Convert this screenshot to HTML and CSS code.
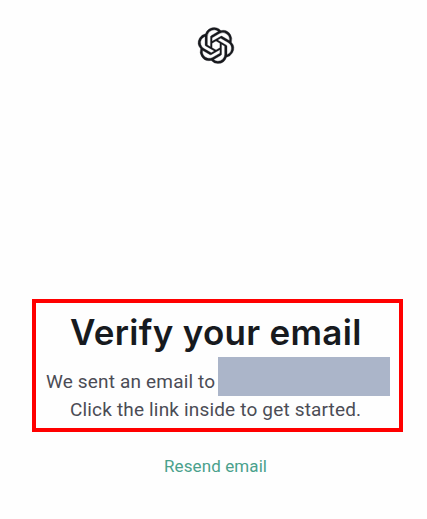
FILE: index.html
```html
<!DOCTYPE html>
<html lang="en">
<head>
<meta charset="utf-8">
<title>Verify your email</title>
<link rel="stylesheet" href="styles.css">
</head>
<body>
<main class="page">
<header class="brand">
<svg class="logo" viewBox="0 0 24 24" role="img" aria-label="OpenAI"><path d="M22.2819 9.8211a5.9847 5.9847 0 0 0-.5157-4.9108 6.0462 6.0462 0 0 0-6.5098-2.9A6.0651 6.0651 0 0 0 4.9807 4.1818a5.9847 5.9847 0 0 0-3.9977 2.9 6.0462 6.0462 0 0 0 .7427 7.0966 5.98 5.98 0 0 0 .511 4.9107 6.051 6.051 0 0 0 6.5146 2.9001A5.9847 5.9847 0 0 0 13.2599 24a6.0557 6.0557 0 0 0 5.7718-4.2058 5.9894 5.9894 0 0 0 3.9977-2.9001 6.0557 6.0557 0 0 0-.7475-7.0729zm-9.022 12.6081a4.4755 4.4755 0 0 1-2.8764-1.0408l.1419-.0804 4.7783-2.7582a.7948.7948 0 0 0 .3927-.6813v-6.7369l2.02 1.1686a.071.071 0 0 1 .038.052v5.5826a4.504 4.504 0 0 1-4.4945 4.4944zm-9.6607-4.1254a4.4708 4.4708 0 0 1-.5346-3.0137l.142.0852 4.783 2.7582a.7712.7712 0 0 0 .7806 0l5.8428-3.3685v2.3324a.0804.0804 0 0 1-.0332.0615L9.74 19.9502a4.4992 4.4992 0 0 1-6.1408-1.6464zM2.3408 7.8956a4.485 4.485 0 0 1 2.3655-1.9728V11.6a.7664.7664 0 0 0 .3879.6765l5.8144 3.3543-2.0201 1.1685a.0757.0757 0 0 1-.071 0l-4.8303-2.7865A4.504 4.504 0 0 1 2.3408 7.872zm16.5963 3.8558L13.1038 8.364 15.1192 7.2a.0757.0757 0 0 1 .071 0l4.8303 2.7913a4.4944 4.4944 0 0 1-.6765 8.1042v-5.6772a.79.79 0 0 0-.407-.667zm2.0107-3.0231l-.142-.0852-4.7735-2.7818a.7759.7759 0 0 0-.7854 0L9.409 9.2297V6.8974a.0662.0662 0 0 1 .0284-.0615l4.8303-2.7866a4.4992 4.4992 0 0 1 6.6802 4.66zM8.3065 12.863l-2.02-1.1638a.0804.0804 0 0 1-.038-.0567V6.0742a4.4992 4.4992 0 0 1 7.3757-3.4537l-.142.0805L8.704 5.459a.7948.7948 0 0 0-.3927.6813zm1.0976-2.3654l2.602-1.4998 2.6069 1.4998v2.9994l-2.5974 1.4997-2.6067-1.4997Z"/></svg>
</header>
<section class="notice">
<h1 class="title">Verify your email</h1>
<p class="line recipient"><span class="text-sent">We sent an email to</span><span class="redacted"></span></p>
<p class="line text-click">Click the link inside to get started.</p>
</section>
<a class="resend">Resend email</a>
</main>
</body>
</html>
```
FILE: styles.css
```css
* { box-sizing: border-box; }
body { margin: 0; background: #fefefe; font-family: Roboto, sans-serif; }
.page { height: 519px; padding: 27px 24px 0 32px; display: flex; flex-direction: column; }
.brand { height: 272px; padding-left: 166px; }
.logo { display: block; width: 36px; height: 37px; fill: #17191d; stroke: #17191d; stroke-width: .2; overflow: visible; }
.notice { width: 371px; height: 133px; border: 4px solid #f00; padding: 0 8px 0 10px; }
.title { margin: 0; height: 54px; font: 600 35px/59px Inter, sans-serif; letter-spacing: .3px; color: #171a1e; white-space: nowrap; padding-left: 24px; }
.line { margin: 0; color: #4b4c55; font-size: 19px; letter-spacing: .17px; white-space: nowrap; }
.recipient { display: flex; height: 39px; line-height: 49px; gap: 3px; }
.text-sent { width: 169px; }
.redacted { width: 172px; height: 39px; background: #abb5c9; }
.text-click { line-height: 28px; padding-left: 24px; }
.resend { align-self: flex-start; margin: 22px 0 0 132px; font-size: 17px; letter-spacing: .1px; line-height: 24px; color: #4aa18c; }
```
